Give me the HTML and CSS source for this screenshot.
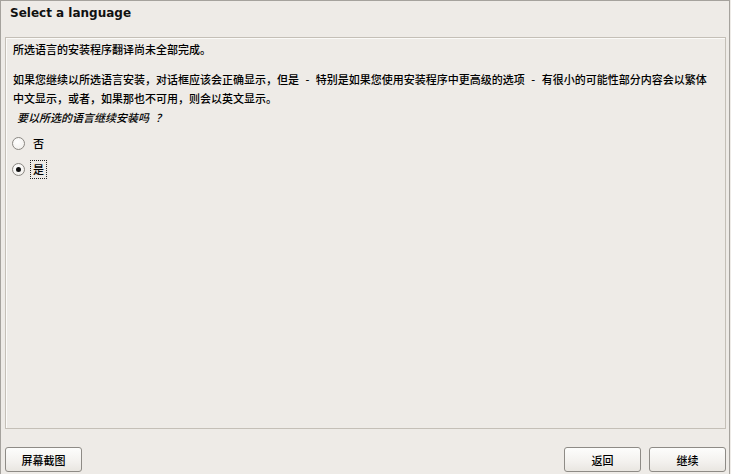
FILE: index.html
```html
<!DOCTYPE html>
<html lang="zh-CN">
<head>
<meta charset="utf-8">
<title>Select a language</title>
<link rel="stylesheet" href="styles.css">
</head>
<body>
<div class="window">
  <div class="title">Select a language</div>
  <div class="frame">
    <p class="p1">所选语言的安装程序翻译尚未全部完成。</p>
    <p class="p2">如果您继续以所选语言安装，对话框应该会正确显示，但是 - 特别是如果您使用安装程序中更高级的选项 - 有很小的可能性部分内容会以繁体中文显示，或者，如果那也不可用，则会以英文显示。</p>
    <p class="question">要以所选的语言继续安装吗 ？</p>
    <div class="radios">
      <label class="radio"><span class="circle"></span><span class="rlabel">否</span></label>
      <label class="radio checked"><span class="circle"></span><span class="rlabel focus">是</span></label>
    </div>
  </div>
  <div class="footer">
    <button class="btn">屏幕截图</button>
    <div class="right">
      <button class="btn">返回</button>
      <button class="btn">继续</button>
    </div>
  </div>
</div>
</body>
</html>
```
FILE: styles.css
```css
html, body {
  margin: 0;
  padding: 0;
  background: #eeebe7;
}
body {
  width: 731px;
  height: 474px;
  overflow: hidden;
  font-family: "Noto Sans CJK SC", "DejaVu Sans", sans-serif;
  font-size: 11px;
  font-weight: 500;
  color: #000;
}
.window {
  box-sizing: border-box;
  width: 730px;
  height: 474px;
  border-top: 1px solid #a5a29d;
  border-left: 1px solid #a5a29d;
  border-right: 1px solid #a5a29d;
  display: flex;
  flex-direction: column;
  background: #eeebe7;
}
.title {
  height: 36px;
  box-sizing: border-box;
  padding: 4px 0 0 9px;
  font-family: "DejaVu Sans", sans-serif;
  font-weight: bold;
  font-size: 12px;
  line-height: 16px;
  color: #111;
}
.frame {
  box-sizing: border-box;
  height: 392px;
  margin: 0 3px 0 4px;
  border: 1px solid #c4bfb7;
  box-shadow: inset 1px 1px 0 #fbfaf8;
  padding: 2px 14px 0 7px;
}
.frame p {
  margin: 0;
  line-height: 19px;
  word-spacing: 4px;
}
.p1 {
  margin-bottom: 11px !important;
}
.question {
  font-style: italic;
  padding-left: 4px;
}
.radios {
  display: flex;
  flex-direction: column;
  padding-top: 7px;
  gap: 7px;
}
.radio {
  display: flex;
  align-items: center;
  height: 19px;
  margin-left: -1px;
}
.circle {
  box-sizing: border-box;
  width: 13px;
  height: 13px;
  border-radius: 50%;
  border: 1px solid #8a8782;
  background: radial-gradient(circle at 40% 35%, #ffffff 0%, #f4f2ef 70%, #e2dfda 100%);
  position: relative;
}
.checked .circle::after {
  content: "";
  position: absolute;
  left: 3px;
  top: 3px;
  width: 5px;
  height: 5px;
  border-radius: 50%;
  background: #111;
}
.rlabel {
  margin-left: 5px;
  padding: 0 2px;
  line-height: 17px;
  border: 1px dotted transparent;
}
.rlabel.focus {
  border-color: #222;
}
.footer {
  flex: 1;
  display: flex;
  justify-content: space-between;
  align-items: flex-start;
  padding: 18px 3px 0 4px;
}
.right {
  display: flex;
  gap: 8px;
}
.btn {
  box-sizing: border-box;
  width: 77px;
  height: 25px;
  border: 1px solid #8e8b86;
  border-radius: 3px;
  background: linear-gradient(#fdfdfc, #f3f1ee 60%, #e9e6e1);
  font-family: "Noto Sans CJK SC", sans-serif;
  font-size: 11px;
  font-weight: 500;
  color: #000;
  padding: 0;
}
```
